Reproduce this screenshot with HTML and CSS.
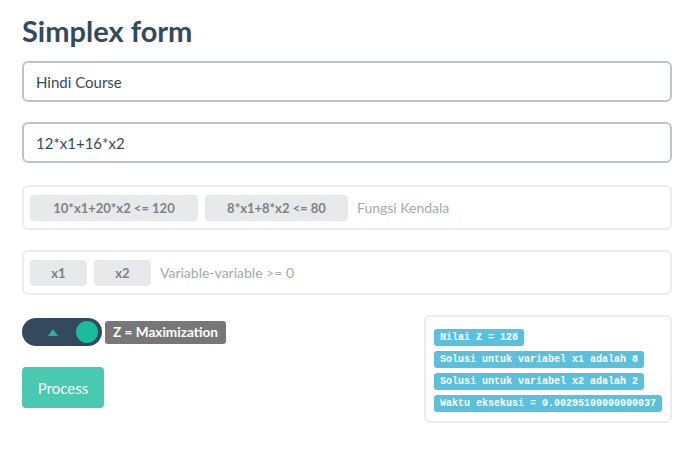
FILE: index.html
```html
<!DOCTYPE html>
<html>
<head>
<meta charset="utf-8">
<link rel="stylesheet" href="styles.css">
</head>
<body>
<div class="page">
  <h1 class="title">Simplex form</h1>
  <div class="input">Hindi Course</div>
  <div class="input input-last">12*x1+16*x2</div>
  <div class="tagbox">
    <span class="tag tag-wide">10*x1+20*x2 &lt;= 120</span>
    <span class="tag tag-mid">8*x1+8*x2 &lt;= 80</span>
    <span class="placeholder">Fungsi Kendala</span>
  </div>
  <div class="tagbox">
    <span class="tag tag-small">x1</span>
    <span class="tag tag-small">x2</span>
    <span class="placeholder">Variable-variable &gt;= 0</span>
  </div>
  <div class="bottom">
    <div class="left">
      <div class="toggle-row">
        <div class="toggle">
          <svg class="tri" width="10" height="7" viewBox="0 0 10 7"><polygon points="5,0 10,7 0,7" fill="#1abc9c"/></svg>
          <span class="knob"></span>
        </div>
        <span class="toggle-label">Z = Maximization</span>
      </div>
      <button class="btn">Process</button>
    </div>
    <div class="results">
      <span class="badge">Nilai Z = 128</span>
      <span class="badge">Solusi untuk variabel x1 adalah 8</span>
      <span class="badge">Solusi untuk variabel x2 adalah 2</span>
      <span class="badge">Waktu eksekusi = 0.00295100000000037</span>
    </div>
  </div>
</div>
</body>
</html>
```
FILE: styles.css
```css
* { box-sizing: border-box; }
body {
  margin: 0;
  font-family: Lato, "Noto Sans", sans-serif;
  background: #fff;
}
.page {
  padding: 12px 18px 0 22px;
  width: 690px;
}
.title {
  margin: 0 0 11px 0;
  font-size: 29px;
  font-weight: 700;
  color: #35495e;
  line-height: 38px;
}
.input {
  height: 41px;
  border: 2px solid #c0c4c8;
  border-radius: 6px;
  padding: 0 12px;
  font-size: 15px;
  color: #35495e;
  display: flex;
  align-items: center;
  margin-bottom: 20px;
}
.input-last {
  margin-bottom: 22px;
}
.tagbox {
  height: 45px;
  border: 2px solid #ececec;
  border-radius: 6px;
  padding: 0 6px;
  display: flex;
  align-items: center;
  gap: 7px;
  margin-bottom: 20px;
}
.tag {
  height: 26px;
  background: #e8e9ea;
  border-radius: 4px;
  color: #7b8288;
  font-weight: 700;
  font-size: 13px;
  display: flex;
  align-items: center;
  justify-content: center;
}
.tag-wide { width: 168px; }
.tag-mid { width: 143px; }
.tag-small { width: 57px; }
.placeholder {
  color: #a3aab0;
  font-size: 14px;
  margin-left: 2px;
}
.bottom {
  display: flex;
  justify-content: space-between;
  align-items: flex-start;
  margin-top: 1px;
}
.left {
  padding-top: 3px;
}
.toggle-row {
  display: flex;
  align-items: center;
  gap: 3px;
}
.toggle {
  width: 80px;
  height: 28px;
  border-radius: 14px;
  background: #35495e;
  display: flex;
  align-items: center;
  padding: 0 2px 0 26px;
}
.tri {
  margin-right: 18px;
}
.knob {
  width: 22px;
  height: 22px;
  border-radius: 50%;
  background: #1abc9c;
}
.toggle-label {
  background: #777;
  color: #fff;
  font-weight: 700;
  font-size: 13.6px;
  height: 23px;
  padding: 0 8px;
  border-radius: 3px;
  display: flex;
  align-items: center;
}
.btn {
  margin-top: 21px;
  width: 82px;
  height: 41px;
  border: none;
  border-radius: 4px;
  background: #48c9b0;
  color: #fff;
  font-family: Lato, "Noto Sans", sans-serif;
  font-size: 15px;
  padding: 0;
}
.results {
  width: 248px;
  border: 2px solid #ececec;
  border-radius: 6px;
  padding: 12px 8px 9px 8px;
  display: flex;
  flex-direction: column;
  align-items: flex-start;
  gap: 5px;
}
.badge {
  background: #5bc0de;
  color: #fff;
  font-family: "Liberation Mono", "DejaVu Sans Mono", monospace;
  font-weight: 700;
  font-size: 10px;
  height: 17px;
  line-height: 17px;
  padding: 0 6px;
  border-radius: 3px;
  white-space: nowrap;
}
```
